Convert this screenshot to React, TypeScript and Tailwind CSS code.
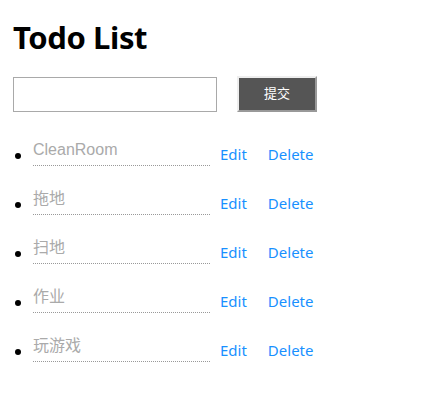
const todos = ["CleanRoom", "拖地", "扫地", "作业", "玩游戏"];

export default function App() {
  return (
    <div className="px-[13px] pt-[17px] font-['Noto_Sans','Noto_Sans_CJK_SC',sans-serif] text-black">
      <h1 className="text-[31px] leading-[40px] font-bold tracking-[-0.4px]">Todo List</h1>

      <div className="mt-[19px] flex items-center gap-[20px]">
        <input
          type="text"
          className="h-[35px] w-[204px] border border-[#a9a9a9] bg-white px-1 outline-none"
        />
        <button className="h-[36px] w-[80px] border-2 border-t-[#eee] border-l-[#eee] border-r-[#999] border-b-[#999] bg-[#555] text-[13px] text-white">
          提交
        </button>
      </div>

      <ul className="mt-[29px]">
        {todos.map((todo) => (
          <li key={todo} className="flex h-[49px] items-start">
            <span className="mt-[12px] ml-[2px] h-[6px] w-[6px] rounded-full bg-black" />
            <span className="ml-[12px] h-[25px] w-[177px] border-b border-dotted border-[#999] font-['Liberation_Sans','Noto_Sans_CJK_SC',sans-serif] text-[16px] leading-[18px] text-[#aaa]">
              {todo}
            </span>
            <a className="mt-[3px] ml-[10px] cursor-pointer text-[15px] leading-[20px] text-[#1890ff]">
              Edit
            </a>
            <a className="mt-[3px] ml-[21px] cursor-pointer text-[15px] leading-[20px] text-[#1890ff]">
              Delete
            </a>
          </li>
        ))}
      </ul>
    </div>
  );
}
